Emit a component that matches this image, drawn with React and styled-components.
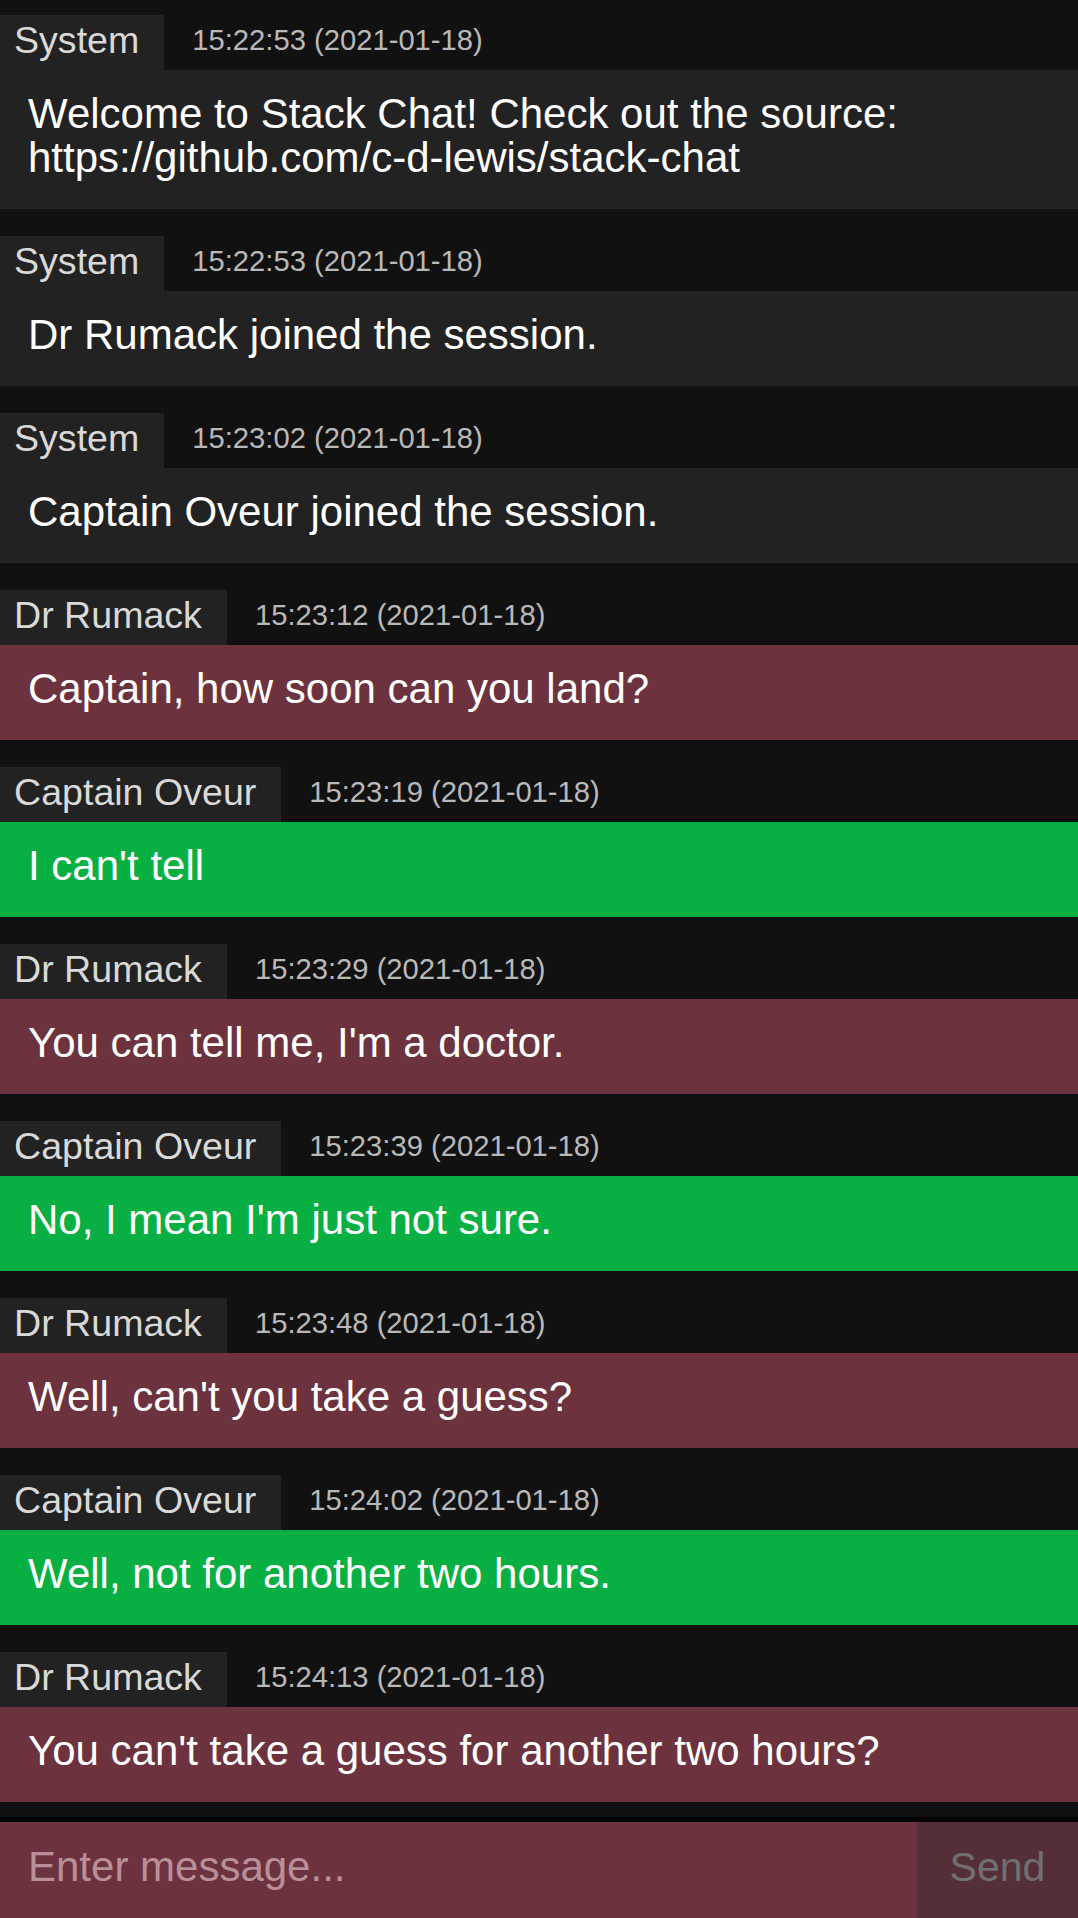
import React from 'react';
import styled, {createGlobalStyle} from 'styled-components';

const GlobalStyle = createGlobalStyle`
    html, body {
        margin: 0;
        padding: 0;
        background-color: #111111;
    }
    body {
        font-family: 'Liberation Sans', Arial, Helvetica, sans-serif;
    }
`;

const ChatPage = styled.div`
    display: flex;
    flex-direction: column;
    height: 100vh;
    overflow: hidden;
    background-color: #111111;
`;

const MessageList = styled.div`
    flex: 1;
    min-height: 0;
    display: flex;
    flex-direction: column;
    justify-content: flex-end;
    gap: 26.5px;
    padding: 12px 0 15px;
    overflow: hidden;
`;

const MessageItem = styled.div`
    display: flex;
    flex-direction: column;
    flex-shrink: 0;
`;

const MessageHeader = styled.div`
    display: flex;
    align-items: flex-start;
    height: 55px;
`;

const Author = styled.span`
    background-color: #222222;
    color: #d9d9d9;
    font-size: 37.6px;
    line-height: 48px;
    padding: 1px 25px 6px 14px;
`;

const Timestamp = styled.span`
    color: #b9b9b9;
    font-size: 29.2px;
    padding-top: 9px;
    margin-left: 28px;
`;

const MessageBody = styled.div`
    background-color: ${props => props.bgcolor};
    color: #ffffff;
    font-size: 42px;
    line-height: 44px;
    padding: 22.5px 28px 29px;
`;

const InputRow = styled.form`
    display: flex;
    height: 96px;
    border-top: 5px solid #000000;
    flex-shrink: 0;
    margin: 0;
`;

const MessageInput = styled.input`
    flex: 1;
    min-width: 0;
    border: none;
    outline: none;
    background-color: #6c333f;
    color: #ffffff;
    font-family: 'Liberation Sans', Arial, sans-serif;
    font-size: 42px;
    padding: 0 28px 6px;
    &::placeholder {
        color: #b98f99;
    }
`;

const SendButton = styled.button`
    width: 161px;
    border: none;
    background-color: #552f37;
    color: #707070;
    font-family: 'Liberation Sans', Arial, sans-serif;
    font-size: 41px;
    padding: 0 0 6px;
    cursor: pointer;
`;

const colors = {
    system: '#222222',
    rumack: '#6c333f',
    oveur: '#08b044',
};

const messages = [
    {author: 'System', kind: 'system', time: '15:22:53 (2021-01-18)', text: <>Welcome to Stack Chat! Check out the source:<br/>https://github.com/c-d-lewis/stack-chat</>},
    {author: 'System', kind: 'system', time: '15:22:53 (2021-01-18)', text: 'Dr Rumack joined the session.'},
    {author: 'System', kind: 'system', time: '15:23:02 (2021-01-18)', text: 'Captain Oveur joined the session.'},
    {author: 'Dr Rumack', kind: 'rumack', time: '15:23:12 (2021-01-18)', text: 'Captain, how soon can you land?'},
    {author: 'Captain Oveur', kind: 'oveur', time: '15:23:19 (2021-01-18)', text: "I can't tell"},
    {author: 'Dr Rumack', kind: 'rumack', time: '15:23:29 (2021-01-18)', text: "You can tell me, I'm a doctor."},
    {author: 'Captain Oveur', kind: 'oveur', time: '15:23:39 (2021-01-18)', text: "No, I mean I'm just not sure."},
    {author: 'Dr Rumack', kind: 'rumack', time: '15:23:48 (2021-01-18)', text: "Well, can't you take a guess?"},
    {author: 'Captain Oveur', kind: 'oveur', time: '15:24:02 (2021-01-18)', text: 'Well, not for another two hours.'},
    {author: 'Dr Rumack', kind: 'rumack', time: '15:24:13 (2021-01-18)', text: "You can't take a guess for another two hours?"},
];

const App = () => {
    return <ChatPage>
        <GlobalStyle />
        <MessageList>
            {messages.map((m, i) => (
                <MessageItem key={i}>
                    <MessageHeader>
                        <Author>{m.author}</Author>
                        <Timestamp>{m.time}</Timestamp>
                    </MessageHeader>
                    <MessageBody bgcolor={colors[m.kind]}>
                        {m.text}
                    </MessageBody>
                </MessageItem>
            ))}
        </MessageList>
        <InputRow onSubmit={e => e.preventDefault()}>
            <MessageInput placeholder="Enter message..." />
            <SendButton type="submit">Send</SendButton>
        </InputRow>
    </ChatPage>
}

export default App;
